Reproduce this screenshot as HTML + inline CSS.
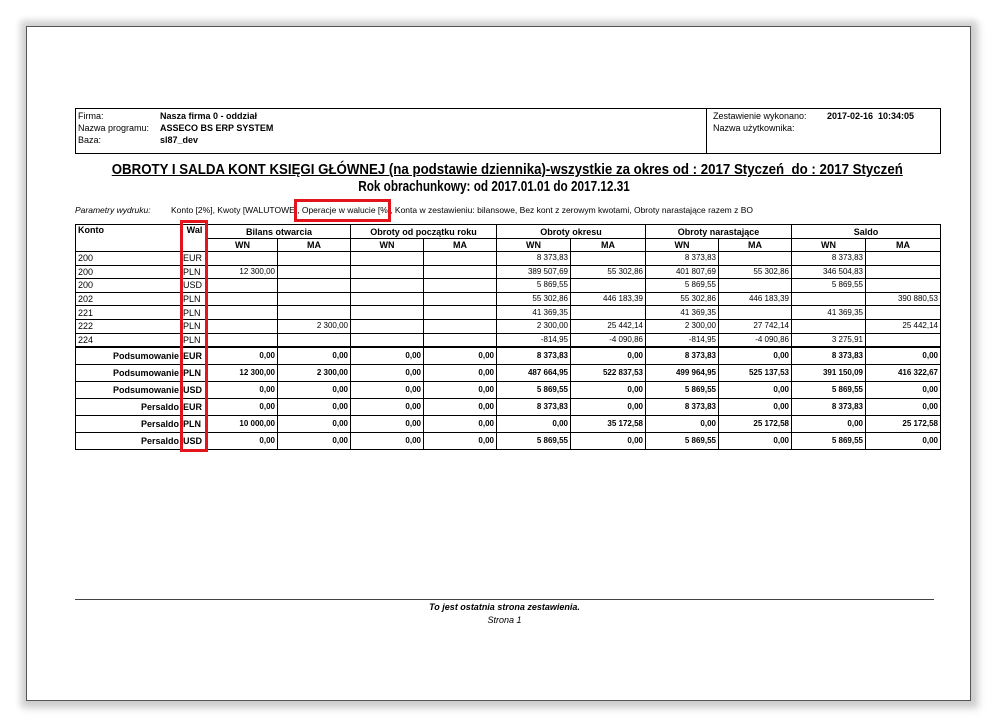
<!DOCTYPE html>
<html><head><meta charset="utf-8">
<style>
html,body{margin:0;padding:0;background:#fff;}
body{width:995px;height:726px;position:relative;overflow:hidden;font-family:"Liberation Sans Narrow","Liberation Sans",sans-serif;color:#000;}
.page{position:absolute;left:26px;top:26px;width:943px;height:673px;border:1px solid #555;background:#fff;box-shadow:0 0 6px 6px rgba(0,0,0,0.13),3px 3px 8px 6px rgba(0,0,0,0.08);}
.abs{position:absolute;white-space:nowrap;}
.hdr{position:absolute;left:75px;top:108px;width:864px;height:44px;border:1px solid #000;}
.hdr .div{position:absolute;left:630px;top:0;width:1px;height:44px;background:#000;}
.f9{font-size:9px;}
.b{font-weight:bold;}
table{position:absolute;left:75px;top:224px;border-collapse:collapse;table-layout:fixed;font-size:8.5px;}
td{border:1px solid #000;padding:0 2px;overflow:hidden;white-space:nowrap;line-height:10px;}
tr.h1 td{height:13px;font-weight:bold;text-align:center;font-size:9px;}
tr.h2 td{height:12px;font-weight:bold;text-align:center;font-size:9px;}
tr.d td{height:12.6px;text-align:right;font-size:8px;}
tr.d td.k{text-align:left;font-size:9px;}
tr.d td.w{text-align:left;font-size:9px;padding:0 1px;}
tr.s td{height:16px;text-align:right;font-weight:bold;font-size:8px;}
tr.s td.k{font-size:9px;}
tr.s td.w{text-align:left;font-size:9px;padding:0 1px;}
tr.first td{border-top:2px solid #000;}
.red{position:absolute;border:3px solid #e3141b;}
</style></head><body>
<div class="page"></div>
<div class="hdr"><div class="div"></div></div>
<div class="abs f9" style="left:78px;top:111px">Firma:</div>
<div class="abs f9" style="left:78px;top:123px">Nazwa programu:</div>
<div class="abs f9" style="left:78px;top:135px">Baza:</div>
<div class="abs f9 b" style="left:160px;top:111px">Nasza firma 0 - oddział</div>
<div class="abs f9 b" style="left:160px;top:123px">ASSECO BS ERP SYSTEM</div>
<div class="abs f9 b" style="left:160px;top:135px">sl87_dev</div>
<div class="abs f9" style="left:713px;top:111px">Zestawienie wykonano:</div>
<div class="abs f9" style="left:713px;top:123px">Nazwa użytkownika:</div>
<div class="abs f9 b" style="left:827px;top:111px">2017-02-16&nbsp; 10:34:05</div>
<div class="abs b" style="left:75px;width:864px;text-align:center;top:162px;font-size:14.5px;font-family:'Liberation Sans',sans-serif;transform:scaleX(0.915);transform-origin:432px 0;margin-left:0"><u>OBROTY I SALDA KONT KSIĘGI GŁÓWNEJ (na podstawie dziennika)-wszystkie za okres od : 2017 Styczeń&nbsp; do : 2017 Styczeń</u></div>
<div class="abs b" style="left:294px;width:400px;text-align:center;top:179px;font-size:14.5px;font-family:'Liberation Sans',sans-serif;transform:scaleX(0.81);transform-origin:200px 0">Rok obrachunkowy: od 2017.01.01 do 2017.12.31</div>
<div class="abs" style="left:75px;top:205px;font-size:8.5px;font-style:italic">Parametry wydruku:</div>
<div class="abs" style="left:171px;top:205px;font-size:8.5px">Konto [2%], Kwoty [WALUTOWE], Operacje w walucie [%], Konta w zestawieniu: bilansowe, Bez kont z zerowym kwotami, Obroty narastające razem z BO</div>
<div class="red" style="left:294px;top:199px;width:91px;height:17px"></div>

<table>
<colgroup><col style="width:106px"><col style="width:26px"><col style="width:70px"><col style="width:73px"><col style="width:73px"><col style="width:73px"><col style="width:74px"><col style="width:75px"><col style="width:73px"><col style="width:73px"><col style="width:74px"><col style="width:75px"></colgroup>
<tr class="h1"><td rowspan="2" style="text-align:left;vertical-align:top">Konto</td><td rowspan="2" style="vertical-align:top">Wal</td><td colspan="2">Bilans otwarcia</td><td colspan="2">Obroty od początku roku</td><td colspan="2">Obroty okresu</td><td colspan="2">Obroty narastające</td><td colspan="2">Saldo</td></tr>
<tr class="h2"><td>WN</td><td>MA</td><td>WN</td><td>MA</td><td>WN</td><td>MA</td><td>WN</td><td>MA</td><td>WN</td><td>MA</td></tr>
<tr class="d"><td class="k">200</td><td class="w">EUR</td><td></td><td></td><td></td><td></td><td>8 373,83</td><td></td><td>8 373,83</td><td></td><td>8 373,83</td><td></td></tr>
<tr class="d"><td class="k">200</td><td class="w">PLN</td><td>12 300,00</td><td></td><td></td><td></td><td>389 507,69</td><td>55 302,86</td><td>401 807,69</td><td>55 302,86</td><td>346 504,83</td><td></td></tr>
<tr class="d"><td class="k">200</td><td class="w">USD</td><td></td><td></td><td></td><td></td><td>5 869,55</td><td></td><td>5 869,55</td><td></td><td>5 869,55</td><td></td></tr>
<tr class="d"><td class="k">202</td><td class="w">PLN</td><td></td><td></td><td></td><td></td><td>55 302,86</td><td>446 183,39</td><td>55 302,86</td><td>446 183,39</td><td></td><td>390 880,53</td></tr>
<tr class="d"><td class="k">221</td><td class="w">PLN</td><td></td><td></td><td></td><td></td><td>41 369,35</td><td></td><td>41 369,35</td><td></td><td>41 369,35</td><td></td></tr>
<tr class="d"><td class="k">222</td><td class="w">PLN</td><td></td><td>2 300,00</td><td></td><td></td><td>2 300,00</td><td>25 442,14</td><td>2 300,00</td><td>27 742,14</td><td></td><td>25 442,14</td></tr>
<tr class="d"><td class="k">224</td><td class="w">PLN</td><td></td><td></td><td></td><td></td><td>-814,95</td><td>-4 090,86</td><td>-814,95</td><td>-4 090,86</td><td>3 275,91</td><td></td></tr>
<tr class="s first"><td class="k">Podsumowanie</td><td class="w">EUR</td><td>0,00</td><td>0,00</td><td>0,00</td><td>0,00</td><td>8 373,83</td><td>0,00</td><td>8 373,83</td><td>0,00</td><td>8 373,83</td><td>0,00</td></tr>
<tr class="s"><td class="k">Podsumowanie</td><td class="w">PLN</td><td>12 300,00</td><td>2 300,00</td><td>0,00</td><td>0,00</td><td>487 664,95</td><td>522 837,53</td><td>499 964,95</td><td>525 137,53</td><td>391 150,09</td><td>416 322,67</td></tr>
<tr class="s"><td class="k">Podsumowanie</td><td class="w">USD</td><td>0,00</td><td>0,00</td><td>0,00</td><td>0,00</td><td>5 869,55</td><td>0,00</td><td>5 869,55</td><td>0,00</td><td>5 869,55</td><td>0,00</td></tr>
<tr class="s"><td class="k">Persaldo</td><td class="w">EUR</td><td>0,00</td><td>0,00</td><td>0,00</td><td>0,00</td><td>8 373,83</td><td>0,00</td><td>8 373,83</td><td>0,00</td><td>8 373,83</td><td>0,00</td></tr>
<tr class="s"><td class="k">Persaldo</td><td class="w">PLN</td><td>10 000,00</td><td>0,00</td><td>0,00</td><td>0,00</td><td>0,00</td><td>35 172,58</td><td>0,00</td><td>25 172,58</td><td>0,00</td><td>25 172,58</td></tr>
<tr class="s"><td class="k">Persaldo</td><td class="w">USD</td><td>0,00</td><td>0,00</td><td>0,00</td><td>0,00</td><td>5 869,55</td><td>0,00</td><td>5 869,55</td><td>0,00</td><td>5 869,55</td><td>0,00</td></tr>
</table>
<div class="red" style="left:180px;top:220px;width:22px;height:226px"></div>

<div class="abs" style="left:75px;top:599px;width:859px;height:1px;background:#444"></div>
<div class="abs b" style="left:75px;width:859px;text-align:center;top:602px;font-size:9px;font-style:italic">To jest ostatnia strona zestawienia.</div>
<div class="abs" style="left:75px;width:859px;text-align:center;top:615px;font-size:9px;font-style:italic">Strona 1</div>
</body></html>
